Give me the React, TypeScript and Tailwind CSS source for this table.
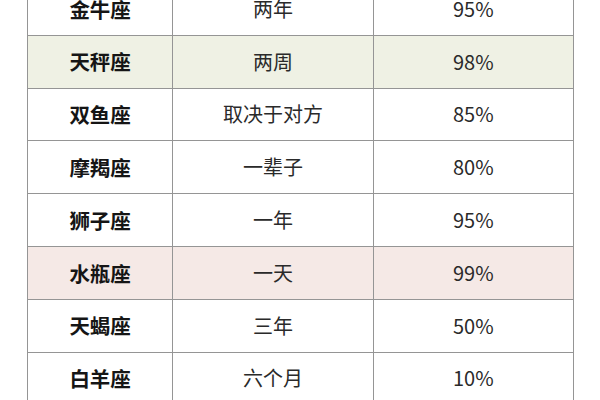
import React from 'react';

type Row = { sign: string; time: string; rate: string; bg?: string };

const rows: Row[] = [
  { sign: '金牛座', time: '两年', rate: '95%' },
  { sign: '天秤座', time: '两周', rate: '98%', bg: 'bg-[#eff1e4]' },
  { sign: '双鱼座', time: '取决于对方', rate: '85%' },
  { sign: '摩羯座', time: '一辈子', rate: '80%' },
  { sign: '狮子座', time: '一年', rate: '95%' },
  { sign: '水瓶座', time: '一天', rate: '99%', bg: 'bg-[#f5e9e6]' },
  { sign: '天蝎座', time: '三年', rate: '50%' },
  { sign: '白羊座', time: '六个月', rate: '10%' },
];

export default function App() {
  return (
    <div className="w-[600px] h-[400px] overflow-hidden bg-white font-['Noto_Sans_CJK_SC',sans-serif]">
      <table className="ml-[27px] -mt-[18px] border-collapse table-fixed w-[547px]">
        <colgroup>
          <col className="w-[145px]" />
          <col className="w-[200px]" />
          <col className="w-[200px]" />
        </colgroup>
        <tbody>
          {rows.map((r) => (
            <tr key={r.sign} className={`h-[52.8px] ${r.bg ?? 'bg-white'}`}>
              <td className="border-[1.5px] border-[#959595] text-center text-[20.5px] font-bold text-[#151515] p-0">
                {r.sign}
              </td>
              <td className="border-[1.5px] border-[#959595] text-center text-[20px] text-[#2a2a2a] p-0">
                {r.time}
              </td>
              <td className="border-[1.5px] border-[#959595] text-center text-[20px] text-[#2a2a2a] p-0">
                {r.rate}
              </td>
            </tr>
          ))}
        </tbody>
      </table>
    </div>
  );
}
